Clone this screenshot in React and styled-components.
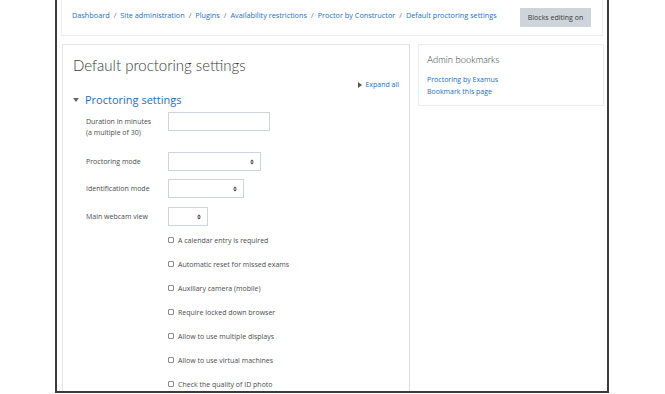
import React from "react";
import styled, { createGlobalStyle } from "styled-components";

const Global = createGlobalStyle`
  html, body { margin: 0; padding: 0; background: #fff; }
  body { font-family: "Open Sans", "Liberation Sans", sans-serif; color: #444; }
  * { box-sizing: border-box; }
`;

const LINK = "#2270bd";
const TEXT = "#4a4d50";

const Page = styled.div`
  padding-left: 55px;
  width: 665px;
  height: 394px;
`;

const Frame = styled.div`
  width: 554px;
  height: 393px;
  border: 2px solid #3a3a3a;
  border-top: none;
  overflow: hidden;
  padding: 0 4px;
  background: #fff;
`;

const Header = styled.div`
  margin-top: -1px;
  height: 37px;
  border: 1px solid #ececec;
  display: flex;
  justify-content: space-between;
  align-items: flex-start;
  padding: 8px 11px 0 10px;
`;

const Crumbs = styled.nav`
  margin-top: 2px;
  font-size: 7.3px;
  line-height: 11px;
  display: flex;
  white-space: nowrap;
`;

const Crumb = styled.span`
  color: ${LINK};
`;

const Sep = styled.span`
  color: #6a737b;
  padding: 0 4px;
`;

const EditButton = styled.button`
  font-family: inherit;
  font-size: 7px;
  color: #373a3c;
  background: #ced4da;
  border: none;
  border-radius: 0;
  height: 19px;
  width: 71px;
  padding: 0;
`;

const Row = styled.div`
  display: flex;
  gap: 8px;
  margin-top: 8px;
  padding-left: 1px;
`;

const MainCard = styled.section`
  width: 348px;
  height: 400px;
  flex: none;
  border: 1px solid #e6e6e6;
  border-right-color: #dcdcdc;
  padding: 11px 10px 0 10px;
`;

const Title = styled.h2`
  margin: 0;
  font-family: Lato, sans-serif;
  font-size: 15px;
  line-height: 18px;
  font-weight: 300;
  color: #373a3c;
`;

const ExpandRow = styled.div`
  margin-top: 6px;
  display: flex;
  justify-content: flex-end;
  font-size: 7px;
  line-height: 10px;
  color: ${LINK};
  align-items: center;
  gap: 3px;
`;

const Legend = styled.div`
  margin-top: 3px;
  display: flex;
  align-items: center;
  font-size: 11px;
  line-height: 14px;
  color: ${LINK};
  gap: 6px;
`;

const Fields = styled.div`
  margin-top: 5px;
  padding-left: 13px;
`;

const FieldRow = styled.div`
  display: flex;
  height: ${(p) => p.$h}px;
`;

const Label = styled.label`
  width: 82px;
  flex: none;
  font-size: 7px;
  line-height: 11px;
  padding-top: 4px;
  color: ${TEXT};
`;

const TextInput = styled.div`
  width: 102px;
  height: 19px;
  border: 1px solid #ced4da;
`;

const Select = styled.div`
  width: ${(p) => p.$w}px;
  height: 19px;
  border: 1px solid #ced4da;
  display: flex;
  align-items: center;
  justify-content: flex-end;
  padding-right: 6px;
`;

const CheckRow = styled.div`
  margin-left: 82px;
  height: 24px;
  display: flex;
  align-items: center;
  gap: 4px;
  font-size: 7px;
  color: ${TEXT};
`;

const Box = styled.span`
  width: 6px;
  height: 6px;
  border: 1px solid #8a8a8a;
  border-radius: 1px;
  flex: none;
`;

const Checks = styled.div`
  margin-top: 2px;
`;

const Side = styled.aside`
  width: 186px;
  height: 62px;
  flex: none;
  border: 1px solid #ececec;
  padding: 9px 8px 0 8px;
`;

const SideTitle = styled.h5`
  margin: 0;
  font-family: Lato, sans-serif;
  font-size: 9.4px;
  line-height: 12px;
  font-weight: 300;
  color: #373a3c;
`;

const SideLinks = styled.div`
  margin-top: 8px;
  display: flex;
  flex-direction: column;
  font-size: 7px;
  line-height: 12px;
  color: ${LINK};
`;

const Arrows = () => (
  <svg width="4" height="6" viewBox="0 0 4 6">
    <path d="M0 2.5 L2 0.5 L4 2.5 Z M0 3.5 L2 5.5 L4 3.5 Z" fill="#444" />
  </svg>
);

const crumbs = [
  "Dashboard",
  "Site administration",
  "Plugins",
  "Availability restrictions",
  "Proctor by Constructor",
  "Default proctoring settings",
];

const checks = [
  "A calendar entry is required",
  "Automatic reset for missed exams",
  "Auxiliary camera (mobile)",
  "Require locked down browser",
  "Allow to use multiple displays",
  "Allow to use virtual machines",
  "Check the quality of ID photo",
];

export default function App() {
  return (
    <Page>
      <Global />
      <Frame>
        <Header>
          <Crumbs>
            {crumbs.map((c, i) => (
              <React.Fragment key={c}>
                {i > 0 && <Sep>/</Sep>}
                <Crumb>{c}</Crumb>
              </React.Fragment>
            ))}
          </Crumbs>
          <EditButton>Blocks editing on</EditButton>
        </Header>
        <Row>
          <MainCard>
            <Title>Default proctoring settings</Title>
            <ExpandRow>
              <svg width="4" height="6" viewBox="0 0 4 6">
                <path d="M0 0 L4 3 L0 6 Z" fill="#555" />
              </svg>
              <span>Expand all</span>
            </ExpandRow>
            <Legend>
              <svg width="6" height="4" viewBox="0 0 6 4">
                <path d="M0 0 L6 0 L3 4 Z" fill="#666" />
              </svg>
              <span>Proctoring settings</span>
            </Legend>
            <Fields>
              <FieldRow $h={40}>
                <Label>
                  Duration in minutes
                  <br />
                  (a multiple of 30)
                </Label>
                <TextInput />
              </FieldRow>
              <FieldRow $h={27}>
                <Label>Proctoring mode</Label>
                <Select $w={93}>
                  <Arrows />
                </Select>
              </FieldRow>
              <FieldRow $h={28}>
                <Label>Identification mode</Label>
                <Select $w={76}>
                  <Arrows />
                </Select>
              </FieldRow>
              <FieldRow $h={19}>
                <Label>Main webcam view</Label>
                <Select $w={40}>
                  <Arrows />
                </Select>
              </FieldRow>
              <Checks>
                {checks.map((c) => (
                  <CheckRow key={c}>
                    <Box />
                    <span>{c}</span>
                  </CheckRow>
                ))}
              </Checks>
            </Fields>
          </MainCard>
          <Side>
            <SideTitle>Admin bookmarks</SideTitle>
            <SideLinks>
              <span>Proctoring by Examus</span>
              <span>Bookmark this page</span>
            </SideLinks>
          </Side>
        </Row>
      </Frame>
    </Page>
  );
}
